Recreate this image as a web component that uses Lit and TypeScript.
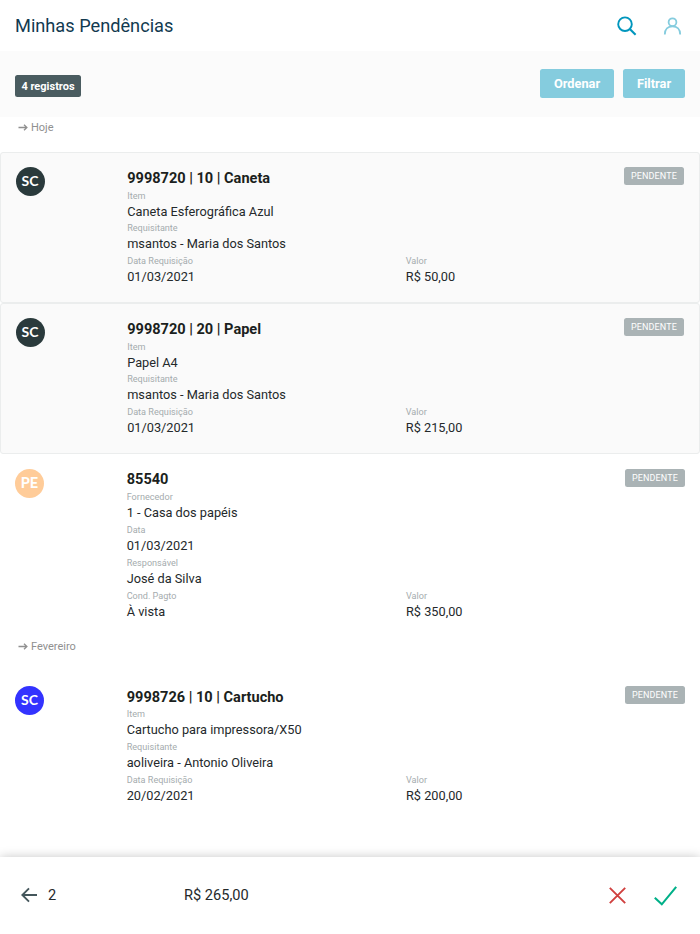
import { LitElement, html, css, svg } from "lit";
import { customElement, property } from "lit/decorators.js";
import { classMap } from "lit/directives/class-map.js";

interface Field {
  label: string;
  value: string;
}

interface Entry {
  initials: string;
  tone: string;
  title: string;
  fields: Field[];
  amount: string;
  selected: boolean;
}

interface Group {
  name: string;
  entries: Entry[];
}

const groups: Group[] = [
  {
    name: "Hoje",
    entries: [
      {
        initials: "SC", tone: "dark", title: "9998720 | 10 | Caneta", amount: "R$ 50,00", selected: true,
        fields: [
          { label: "Item", value: "Caneta Esferográfica Azul" },
          { label: "Requisitante", value: "msantos - Maria dos Santos" },
          { label: "Data Requisição", value: "01/03/2021" },
        ],
      },
      {
        initials: "SC", tone: "dark", title: "9998720 | 20 | Papel", amount: "R$ 215,00", selected: true,
        fields: [
          { label: "Item", value: "Papel A4" },
          { label: "Requisitante", value: "msantos - Maria dos Santos" },
          { label: "Data Requisição", value: "01/03/2021" },
        ],
      },
      {
        initials: "PE", tone: "peach", title: "85540", amount: "R$ 350,00", selected: false,
        fields: [
          { label: "Fornecedor", value: "1 - Casa dos papéis" },
          { label: "Data", value: "01/03/2021" },
          { label: "Responsável", value: "José da Silva" },
          { label: "Cond. Pagto", value: "À vista" },
        ],
      },
    ],
  },
  {
    name: "Fevereiro",
    entries: [
      {
        initials: "SC", tone: "blue", title: "9998726 | 10 | Cartucho", amount: "R$ 200,00", selected: false,
        fields: [
          { label: "Item", value: "Cartucho para impressora/X50" },
          { label: "Requisitante", value: "aoliveira - Antonio Oliveira" },
          { label: "Data Requisição", value: "20/02/2021" },
        ],
      },
    ],
  },
];

@customElement("entry-card")
export class EntryCard extends LitElement {
  @property({ attribute: false }) entry!: Entry;

  static styles = css`
    :host { display: block; }
    .card {
      box-sizing: border-box;
      display: grid;
      grid-template-columns: 111.7px 279.3px 1fr auto;
      padding: 14.7px 15px 14.9px;
    }
    .selected {
      grid-template-columns: 111.7px 278.6px 1fr auto;
      border: 1px solid #ebeded;
      border-radius: 3px;
      background: #fafafa;
      padding: 14.1px 15px 15px 14.5px;
    }
    .avatar {
      width: 29px;
      height: 29px;
      border-radius: 50%;
      box-sizing: border-box;
      padding-bottom: 1px;
      display: flex;
      align-items: center;
      justify-content: center;
      color: #fff;
      font: 700 14px/1 Lato, sans-serif;
    }
    .dark { background: #2a3a3c; }
    .peach { background: #ffcc99; font-family: Roboto, sans-serif; }
    .blue { background: #3333ff; }
    .details { padding-top: 0.8px; }
    .title {
      font-size: 14.55px;
      font-weight: 700;
      line-height: 22px;
      margin-bottom: -1.3px;
      color: #1b1f20;
      white-space: nowrap;
    }
    .label {
      font-size: 9.1px;
      line-height: 14px;
      color: #a5acae;
    }
    .value {
      font-size: 12.75px;
      line-height: 18.8px;
      color: #24292b;
      white-space: nowrap;
    }
    .amount { align-self: end; }
    .status {
      align-self: start;
      width: 60px;
      height: 18px;
      border-radius: 2.5px;
      background: #aab3b5;
      color: #fff;
      font-size: 9px;
      line-height: 18px;
      text-align: center;
      letter-spacing: 0.1px;
    }
  `;

  render() {
    const e = this.entry;
    return html`
      <article class=${classMap({ card: true, selected: e.selected })}>
        <div class="avatar ${e.tone}">${e.initials}</div>
        <div class="details">
          <div class="title">${e.title}</div>
          ${e.fields.map((f) => html`
            <div class="label">${f.label}</div>
            <div class="value">${f.value}</div>
          `)}
        </div>
        <div class="amount">
          <div class="label">Valor</div>
          <div class="value">${e.amount}</div>
        </div>
        <div class="status">PENDENTE</div>
      </article>
    `;
  }
}

const smallArrow = svg`<path d="M0.5 4.5H9M6 1.7L8.9 4.5L6 7.3" />`;

@customElement("app-root")
export class AppRoot extends LitElement {
  static styles = css`
    :host {
      display: flex;
      flex-direction: column;
      height: 934px;
      overflow: hidden;
      background: #fff;
      font-family: Roboto, sans-serif;
    }
    svg { display: block; fill: none; stroke: currentColor; }
    .header {
      height: 51px;
      display: flex;
      align-items: center;
      padding: 0 18px 0 15px;
      box-sizing: border-box;
      flex: none;
    }
    .heading {
      margin: 0;
      flex: 1;
      font-size: 18.2px;
      font-weight: 400;
      color: #123a50;
    }
    .search { color: #0096bd; margin-right: 26px; }
    .user { color: #85ccde; }
    .toolbar {
      height: 66px;
      flex: none;
      display: flex;
      align-items: center;
      gap: 9px;
      padding: 0 15px;
      box-sizing: border-box;
      background: #fbfbfb;
    }
    .count {
      margin: 4px auto 0 0;
      width: 66px;
      height: 22px;
      border-radius: 2.5px;
      background: #4a5c60;
      color: #fff;
      font-size: 11px;
      font-weight: 700;
      line-height: 23px;
      text-align: center;
    }
    .action {
      border: 0;
      padding: 0;
      height: 29px;
      margin-bottom: 0.5px;
      border-radius: 2.5px;
      background: #85ccde;
      color: #fff;
      font: 700 12.8px/28px Roboto, sans-serif;
    }
    .sort { width: 74px; }
    .filter { width: 62px; }
    .list { flex: 1; min-height: 0; }
    .group {
      display: flex;
      align-items: center;
      gap: 3px;
      height: 35px;
      box-sizing: border-box;
      padding: 0 18px 15px;
      font-size: 11px;
      color: #909090;
    }
    .footer {
      height: 77px;
      flex: none;
      box-sizing: border-box;
      display: flex;
      align-items: center;
      padding: 0 23px 1px 21px;
      background: #fff;
      box-shadow: 0 0 10px rgba(0, 0, 0, 0.22);
      color: #24292b;
      font-size: 14.6px;
      position: relative;
    }
    .back { color: #44565b; margin-right: 11px; }
    .selected-count { width: 136px; }
    .total { flex: 1; }
    .reject { color: #d0403f; margin-right: 28px; }
    .approve { color: #00b088; margin-top: 1px; }
  `;

  render() {
    return html`
      <header class="header">
        <h1 class="heading">Minhas Pendências</h1>
        <svg class="search" width="20" height="20" viewBox="0 0 20 20" stroke-width="1.9">
          <circle cx="8" cy="8.2" r="6.8" /><path d="M12.8 13L18.6 18.8" stroke-width="2.1" />
        </svg>
        <svg class="user" width="19" height="18" viewBox="0 0 19 18" stroke-width="1.8">
          <circle cx="9.5" cy="5.2" r="3.9" /><path d="M1.8 17.4C1.8 12.4 5 9.3 9.5 9.3S17.2 12.4 17.2 17.4" />
        </svg>
      </header>
      <div class="toolbar">
        <span class="count">4 registros</span>
        <button class="action sort">Ordenar</button>
        <button class="action filter">Filtrar</button>
      </div>
      <main class="list">
        ${groups.map((g) => html`
          <div class="group">
            <svg width="10" height="9" viewBox="0 0 10 9" stroke-width="1.3">${smallArrow}</svg>
            <span>${g.name}</span>
          </div>
          ${g.entries.map((e) => html`<entry-card .entry=${e}></entry-card>`)}
        `)}
      </main>
      <footer class="footer">
        <svg class="back" width="16" height="16" viewBox="0 0 16 16" stroke-width="1.9">
          <path d="M16 8H1.5M8 1.3L1.3 8L8 14.7" />
        </svg>
        <span class="selected-count">2</span>
        <span class="total">R$ 265,00</span>
        <svg class="reject" width="17" height="17" viewBox="0 0 17 17" stroke-width="1.9">
          <path d="M0.8 0.8L16.2 16.2M16.2 0.8L0.8 16.2" />
        </svg>
        <svg class="approve" width="23" height="20" viewBox="0 0 23 20" stroke-width="2.1">
          <path d="M0.8 11.8L7.8 18.3L22.2 0.8" />
        </svg>
      </footer>
    `;
  }
}
